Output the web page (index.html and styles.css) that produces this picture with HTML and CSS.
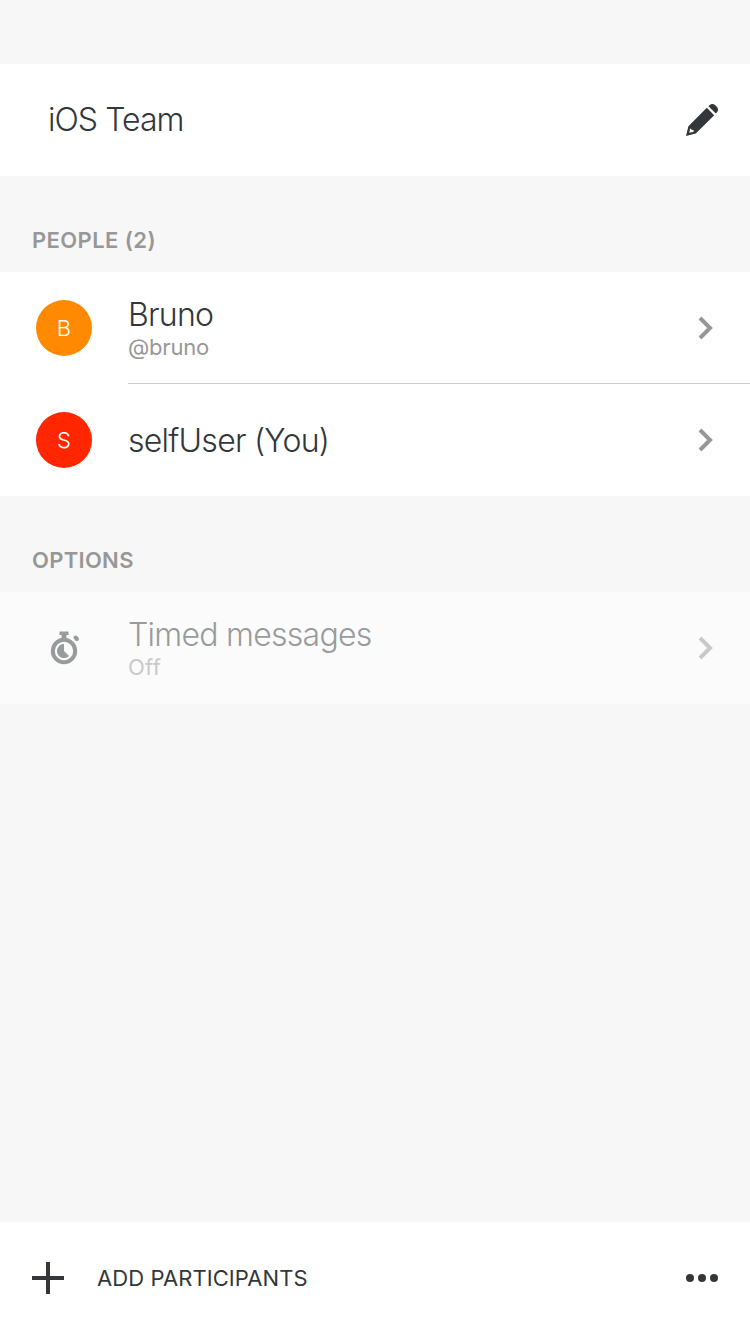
FILE: index.html
```html
<!DOCTYPE html>
<html lang="en">
<head>
<meta charset="utf-8">
<title>iOS Team</title>
<link rel="stylesheet" href="styles.css">
</head>
<body>
<main class="screen">
  <header class="title-bar">
    <h1 class="name group-name">iOS Team</h1>
    <svg class="pencil" width="32" height="32" viewBox="0 0 32 32"><path fill-rule="evenodd" d="M20.800 3.800 28.200 11.200 9.800 29.600 0 32 2.400 22.200ZM4.200 24.300 3.300 28.700 7.700 27.800 7.500 26 5.700 25.800ZM22.500 2.200 23.700 1Q26.300-1 29 1L31 3Q33 5.700 31 8.300L29.800 9.500Z"/></svg>
  </header>

  <h2 class="section-title people">PEOPLE (2)</h2>
  <section>
    <div class="row">
      <span class="avatar orange">B</span>
      <div class="cell divided">
        <div class="labels"><span class="name bruno">Bruno</span><span class="detail handle">@bruno</span></div>
        <svg class="chevron" width="16" height="24" viewBox="0 0 16 24"><path d="M2 2 12 12 2 22"/></svg>
      </div>
    </div>
    <div class="row">
      <span class="avatar red">S</span>
      <div class="cell">
        <div class="labels"><span class="name self">selfUser (You)</span></div>
        <svg class="chevron" width="16" height="24" viewBox="0 0 16 24"><path d="M2 2 12 12 2 22"/></svg>
      </div>
    </div>
  </section>

  <h2 class="section-title options">OPTIONS</h2>
  <section>
    <div class="row disabled">
      <svg class="timer" width="32" height="34" viewBox="0 0 32 34"><circle cx="14" cy="20" r="11.200"/><path class="solid" d="M9.500 .5H18.500V4H16.500V9H11.500V4H9.500ZM14 13V20L19 24.900A7 7 0 1 1 14 13Z"/><path class="button" d="M25.500 6.500 27 8"/></svg>
      <div class="cell">
        <div class="labels"><span class="name timed">Timed messages</span><span class="detail off">Off</span></div>
        <svg class="chevron" width="16" height="24" viewBox="0 0 16 24"><path d="M2 2 12 12 2 22"/></svg>
      </div>
    </div>
  </section>

  <footer class="footer">
    <svg class="plus" width="32" height="32" viewBox="0 0 32 32"><path d="M14 0H18V14H32V18H18V32H14V18H0V14H14Z"/></svg>
    <span class="add">ADD PARTICIPANTS</span>
    <svg class="more" width="32" height="8" viewBox="0 0 32 8"><circle cx="4" cy="4" r="4"/><circle cx="16" cy="4" r="4"/><circle cx="28" cy="4" r="4"/></svg>
  </footer>
</main>
</body>
</html>
```
FILE: styles.css
```css
* { box-sizing: border-box; }
body { margin: 0; font-family: Inter, "Liberation Sans", sans-serif; color: #33373a; }
.screen { display: flex; flex-direction: column; height: 1334px; padding-top: 64px; background: #f7f7f7; }
.title-bar { display: flex; align-items: center; justify-content: space-between; height: 112px; padding: 0 32px 0 48px; background: #fff; }
.name { margin: 0; font-size: 32px; font-weight: 300; line-height: 40px; letter-spacing: -0.75px; white-space: nowrap; }
.group-name { letter-spacing: -0.95px; }
.pencil, .plus, .more { fill: #33373a; flex: none; }
.section-title { display: flex; align-items: flex-end; height: 96px; margin: 0; padding: 0 32px 18px; color: #979797; font-size: 22px; line-height: 27px; font-weight: 600; white-space: pre; }
.people { letter-spacing: 0.4px; }
.options { letter-spacing: 0.3px; }
.row { display: flex; align-items: center; height: 112px; padding-left: 36px; background: #fff; }
.avatar { display: flex; align-items: center; justify-content: center; width: 56px; height: 56px; margin-right: 36px; border-radius: 50%; color: #fff; font-size: 22px; font-weight: 300; }
.orange { background: #ff8900; }
.red { background: #ff2600; }
.cell { display: flex; align-items: center; justify-content: space-between; flex: 1; height: 112px; padding-right: 36px; }
.divided { background: linear-gradient(#cbcbcb, #cbcbcb) bottom / 100% 1px no-repeat; }
.labels { display: flex; flex-direction: column; align-items: flex-start; }
.self { padding-top: 1px; }
.detail { margin-bottom: 2px; color: #979797; font-size: 22px; line-height: 25px; font-weight: 400; letter-spacing: -0.2px; }
.off { letter-spacing: 0.3px; }
.chevron { fill: none; stroke: #979797; stroke-width: 4; }
.disabled { background: #fbfbfb; color: #999b9c; }
.disabled .detail { color: #c9c9c9; }
.disabled .chevron { stroke: #c9c9c9; }
.timer { margin: 0 46px 0 14px; fill: none; stroke: #979b9b; stroke-width: 4; }
.timer .solid { fill: #979b9b; stroke: none; }
.timer .button { stroke-linecap: round; }
.footer { display: flex; align-items: center; height: 112px; margin-top: auto; padding: 0 32px; background: #fff; }
.add { margin-left: 33px; font-size: 22px; line-height: 27px; letter-spacing: 0.07px; }
.more { margin-left: auto; }
```
